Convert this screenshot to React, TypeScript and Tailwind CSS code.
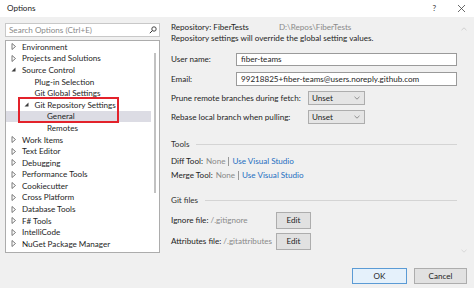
import React from "react";

const font = { fontFamily: 'Lato, "Noto Sans", sans-serif' };

type Item = { label: string; level: number; arrow?: "closed" | "open"; selected?: boolean };

const items: Item[] = [
  { label: "Environment", level: 0, arrow: "closed" },
  { label: "Projects and Solutions", level: 0, arrow: "closed" },
  { label: "Source Control", level: 0, arrow: "open" },
  { label: "Plug-in Selection", level: 1 },
  { label: "Git Global Settings", level: 1 },
  { label: "Git Repository Settings", level: 1, arrow: "open" },
  { label: "General", level: 2, selected: true },
  { label: "Remotes", level: 2 },
  { label: "Work Items", level: 0, arrow: "closed" },
  { label: "Text Editor", level: 0, arrow: "closed" },
  { label: "Debugging", level: 0, arrow: "closed" },
  { label: "Performance Tools", level: 0, arrow: "closed" },
  { label: "Cookiecutter", level: 0, arrow: "closed" },
  { label: "Cross Platform", level: 0, arrow: "closed" },
  { label: "Database Tools", level: 0, arrow: "closed" },
  { label: "F# Tools", level: 0, arrow: "closed" },
  { label: "IntelliCode", level: 0, arrow: "closed" },
  { label: "NuGet Package Manager", level: 0, arrow: "closed" },
  { label: "Python", level: 0, arrow: "closed" },
];

const T = "text-[8.1px] whitespace-nowrap";

function Arrow({ kind }: { kind?: "closed" | "open" }) {
  if (!kind) return <span className="inline-block w-[9px]" />;
  if (kind === "closed")
    return (
      <svg width="9" height="9" viewBox="0 0 9 9" className="shrink-0">
        <path d="M3 1.5 L6.5 4.5 L3 7.5 Z" fill="none" stroke="#6b6b6b" strokeWidth="0.9" />
      </svg>
    );
  return (
    <svg width="9" height="9" viewBox="0 0 9 9" className="shrink-0">
      <path d="M6.5 2.5 L6.5 6.5 L2.5 6.5 Z" fill="#3c3c3c" />
    </svg>
  );
}

function Select() {
  return (
    <div className={`w-[57px] h-[14px] bg-[#e5e5e5] border border-[#adadad] flex items-center justify-between pl-[3px] pr-[4px] ${T} text-[#1e1e1e]`}>
      <span>Unset</span>
      <svg width="6" height="4" viewBox="0 0 6 4">
        <path d="M0.5 0.8 L3 3.2 L5.5 0.8" fill="none" stroke="#777" strokeWidth="0.8" />
      </svg>
    </div>
  );
}

function Btn({ children, w, primary }: { children: React.ReactNode; w: string; primary?: boolean }) {
  return (
    <div
      className={`${w} flex items-center justify-center ${T} text-[#1e1e1e] ${
        primary ? "bg-[#e5f1fb] border border-[#5b9bd5]" : "bg-[#e1e1e1] border border-[#adadad]"
      }`}
    >
      {children}
    </div>
  );
}

export default function App() {
  return (
    <div className="w-[474px] h-[288px] bg-[#f0f0f0] flex flex-col overflow-hidden relative text-[#1e1e1e]" style={font}>
      {/* title bar */}
      <div className="h-[17px] bg-white flex items-center pl-[7px] pr-[8px] shrink-0">
        <span className={`${T} text-[#1a1a1a]`}>Options</span>
        <span className={`ml-auto ${T} text-[#333] mr-[21px]`}>?</span>
        <svg width="9" height="9" viewBox="0 0 9 9">
          <path d="M1 1 L8 8 M8 1 L1 8" stroke="#444" strokeWidth="0.8" />
        </svg>
      </div>

      <div className="flex flex-1 min-h-0">
        {/* left column */}
        <div className="w-[160px] pl-[5px] pt-[6px] flex flex-col shrink-0">
          <div className="h-[14px] bg-white border border-[#c8c8c8] flex items-center pl-[3px] pr-[2px]">
            <span className={`${T} text-[#8a8a8a]`}>Search Options (Ctrl+E)</span>
            <svg className="ml-auto" width="8" height="8" viewBox="0 0 8 8">
              <circle cx="5" cy="3" r="2.2" fill="none" stroke="#333" strokeWidth="0.9" />
              <path d="M3.4 4.6 L0.8 7.2" stroke="#333" strokeWidth="1" />
            </svg>
          </div>
          <div className="mt-[3px] h-[214px] bg-white border border-[#acacac] relative overflow-hidden flex">
            <div className="flex-1 flex flex-col">
              {items.map((it, i) => (
                <div
                  key={i}
                  className={`h-[11.6px] flex items-center shrink-0 ${it.selected ? "bg-[#dcdce4]" : ""}`}
                  style={{ paddingLeft: 2 + it.level * 12.5 + "px" }}
                >
                  <span className="w-[14px] flex items-center justify-start pl-[1px]">
                    <Arrow kind={it.arrow} />
                  </span>
                  <span className={`${T} leading-none`}>{it.label}</span>
                </div>
              ))}
            </div>
            <div className="w-[8px] shrink-0 flex justify-center pt-[12px]">
              <div className="w-[2px] h-[140px] bg-[#c2c2c2]" />
            </div>
          </div>
        </div>

        {/* right panel */}
        <div className="flex-1 pl-[11px] pr-[17px] pt-[5px] flex flex-col relative">
          <div className={`flex ${T} h-[11px] items-center`}>
            <span>Repository: FiberTests</span>
            <span className="ml-[30px] text-[#8a8a8a]">D:\Repos\FiberTests</span>
          </div>
          <div className={`${T} h-[11px] flex items-center`}>Repository settings will override the global setting values.</div>

          <div className="mt-[9px] flex items-center h-[13px]">
            <span className={`w-[65px] ${T}`}>User name:</span>
            <div className={`flex-1 h-[13px] bg-white border border-[#9a9a9a] flex items-center pl-[4px] ${T}`}>fiber-teams</div>
          </div>
          <div className="mt-[6px] flex items-center h-[14px]">
            <span className={`w-[65px] ${T}`}>Email:</span>
            <div className={`flex-1 h-[14px] bg-white border border-[#9a9a9a] flex items-center pl-[4px] ${T}`}>99218825+fiber-teams@users.noreply.github.com</div>
          </div>
          <div className="mt-[5px] flex items-center h-[14px]">
            <span className={`w-[137px] ${T}`}>Prune remote branches during fetch:</span>
            <Select />
          </div>
          <div className="mt-[5px] flex items-center h-[14px]">
            <span className={`w-[137px] ${T}`}>Rebase local branch when pulling:</span>
            <Select />
          </div>

          <div className="mt-[15px] flex items-center h-[11px]">
            <span className={`${T} text-[#333]`}>Tools</span>
            <div className="flex-1 ml-[7px] h-px bg-[#d4d4d4]" />
          </div>
          <div className={`mt-[5px] flex items-center h-[12px] ${T}`}>
            <span>Diff Tool:</span>
            <span className="ml-[3px] text-[#8a8a8a]">None</span>
            <span className="mx-[3px] w-px h-[9px] bg-[#999]" />
            <span className="text-[#1f6fc1]">Use Visual Studio</span>
          </div>
          <div className={`mt-[2px] flex items-center h-[12px] ${T}`}>
            <span>Merge Tool:</span>
            <span className="ml-[3px] text-[#8a8a8a]">None</span>
            <span className="mx-[3px] w-px h-[9px] bg-[#999]" />
            <span className="text-[#1f6fc1]">Use Visual Studio</span>
          </div>

          <div className="mt-[14px] flex items-center h-[11px]">
            <span className={`${T} text-[#333]`}>Git files</span>
            <div className="flex-1 ml-[7px] h-px bg-[#d4d4d4]" />
          </div>
          <div className="mt-[6px] flex items-center h-[17px]">
            <span className={`w-[105px] ${T}`}>
              Ignore file: <span className="text-[#8a8a8a]">/.gitignore</span>
            </span>
            <Btn w="w-[35px] h-[17px]">Edit</Btn>
          </div>
          <div className="mt-[4px] flex items-center h-[17px]">
            <span className={`w-[105px] ${T}`}>
              Attributes file: <span className="text-[#8a8a8a]">/.gitattributes</span>
            </span>
            <Btn w="w-[35px] h-[17px]">Edit</Btn>
          </div>

          {/* scroll arrows */}
          <svg className="absolute right-[7px] top-[10px]" width="6" height="4" viewBox="0 0 6 4">
            <path d="M0.5 3.2 L3 0.8 L5.5 3.2" fill="none" stroke="#c8c8c8" strokeWidth="0.8" />
          </svg>
          <svg className="absolute right-[7px] top-[232px]" width="6" height="4" viewBox="0 0 6 4">
            <path d="M0.5 0.8 L3 3.2 L5.5 0.8" fill="none" stroke="#d0d0d0" strokeWidth="0.8" />
          </svg>
        </div>
      </div>

      {/* footer */}
      <div className="h-[35px] shrink-0 flex items-start justify-end pr-[7px] pt-[15px] gap-[7px]">
        <Btn w="w-[55px] h-[16px]" primary>OK</Btn>
        <Btn w="w-[53px] h-[16px]">Cancel</Btn>
      </div>

      {/* red annotation box */}
      <div className="absolute left-[18px] top-[97px] w-[101px] h-[26px] border-2 border-[#e3222b] pointer-events-none" />
    </div>
  );
}
